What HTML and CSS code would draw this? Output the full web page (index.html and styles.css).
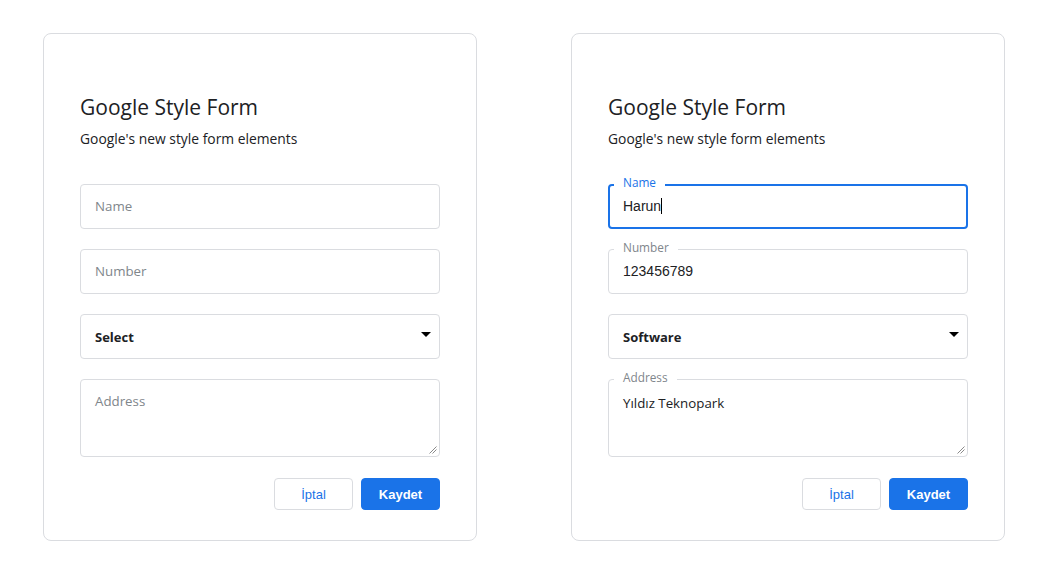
FILE: index.html
```html
<!DOCTYPE html>
<html lang="tr">
<head>
<meta charset="utf-8">
<title>Google Style Form</title>
<link rel="stylesheet" href="styles.css">
</head>
<body>
<div class="page">
  <form class="card">
    <h1 class="title">Google Style Form</h1>
    <p class="subtitle">Google's new style form elements</p>
    <div class="fields">
      <div class="field"><span class="placeholder">Name</span></div>
      <div class="field"><span class="placeholder">Number</span></div>
      <div class="field select"><span class="select-value">Select</span><span class="arrow"></span></div>
      <div class="field area"><span class="placeholder">Address</span>
        <svg class="grip" width="8" height="8" viewBox="0 0 8 8"><path d="M7.5 0.5 L0.5 7.5 M7.5 3.5 L3.5 7.5" stroke="#8a8a8a" stroke-width="1" fill="none"/></svg>
      </div>
    </div>
    <div class="actions">
      <button type="button" class="btn btn-outline">İptal</button>
      <button type="button" class="btn btn-primary">Kaydet</button>
    </div>
  </form>

  <form class="card">
    <h1 class="title">Google Style Form</h1>
    <p class="subtitle">Google's new style form elements</p>
    <div class="fields">
      <div class="field focused"><span class="label label-active">Name</span><span class="value">Harun</span><span class="caret"></span></div>
      <div class="field"><span class="label">Number</span><span class="value">123456789</span></div>
      <div class="field select"><span class="select-value">Software</span><span class="arrow"></span></div>
      <div class="field area"><span class="label">Address</span><span class="area-value">Yıldız Teknopark</span>
        <svg class="grip" width="8" height="8" viewBox="0 0 8 8"><path d="M7.5 0.5 L0.5 7.5 M7.5 3.5 L3.5 7.5" stroke="#8a8a8a" stroke-width="1" fill="none"/></svg>
      </div>
    </div>
    <div class="actions">
      <button type="button" class="btn btn-outline">İptal</button>
      <button type="button" class="btn btn-primary">Kaydet</button>
    </div>
  </form>
</div>
</body>
</html>
```

FILE: styles.css
```css
html, body {
  margin: 0;
  background: #ffffff;
}
body {
  font-family: "Open Sans", "Noto Sans", sans-serif;
  color: #202124;
}
.page {
  display: flex;
  gap: 94px;
  padding: 33px 0 0 43px;
}
.card {
  width: 434px;
  box-sizing: border-box;
  border: 1px solid #dadce0;
  border-radius: 8px;
  padding: 59px 36px 30px;
  margin: 0;
}
.title {
  margin: 0;
  font-size: 21px;
  line-height: 28px;
  font-weight: 400;
  color: #202124;
}
.subtitle {
  margin: 8px 0 0;
  font-size: 13.85px;
  line-height: 19px;
  color: #202124;
}
.fields {
  display: flex;
  flex-direction: column;
  gap: 20px;
  margin-top: 36px;
}
.field {
  position: relative;
  height: 45px;
  box-sizing: border-box;
  border: 1px solid #dadce0;
  border-radius: 4px;
  padding: 0 14px;
  display: flex;
  align-items: center;
}
.field.focused {
  border: 2px solid #1a73e8;
  padding: 0 13px;
}
.placeholder {
  font-size: 13.3px;
  color: #80868b;
  margin-bottom: 2px;
}
.value {
  font-family: "Liberation Sans", Arial, sans-serif;
  font-size: 14px;
  color: #202124;
  margin-bottom: 2px;
}
.caret {
  width: 1px;
  height: 16px;
  background: #000;
  margin-bottom: 2px;
}
.label {
  position: absolute;
  top: -10px;
  left: 5px;
  padding: 0 9px;
  background: #fff;
  font-size: 11.8px;
  line-height: 14px;
  color: #80868b;
}
.focused .label {
  top: -11px;
  left: 4px;
}
.label-active {
  color: #1a73e8;
}
.select {
  justify-content: space-between;
}
.select-value {
  font-size: 13px;
  font-weight: 700;
  color: #202124;
}
.arrow {
  width: 0;
  height: 0;
  border-left: 5px solid transparent;
  border-right: 5px solid transparent;
  border-top: 5px solid #000;
  margin-right: -6px;
  margin-top: -4px;
}
.area {
  height: 78px;
  align-items: flex-start;
  padding-top: 12px;
}
.area .placeholder {
  margin-bottom: 0;
}
.area-value {
  font-size: 13.3px;
  color: #202124;
  margin-top: 2px;
}
.grip {
  position: absolute;
  right: 2px;
  bottom: 2px;
}
.actions {
  display: flex;
  justify-content: flex-end;
  gap: 8px;
  margin-top: 21px;
}
.btn {
  width: 79px;
  height: 32px;
  box-sizing: border-box;
  border-radius: 4px;
  font-family: "Liberation Sans", Arial, sans-serif;
  font-size: 13px;
  padding: 0;
  cursor: pointer;
}
.btn-outline {
  background: #fff;
  border: 1px solid #dadce0;
  color: #1a73e8;
}
.btn-primary {
  background: #1a73e8;
  border: 1px solid #1a73e8;
  color: #fff;
  font-weight: 700;
}
```
